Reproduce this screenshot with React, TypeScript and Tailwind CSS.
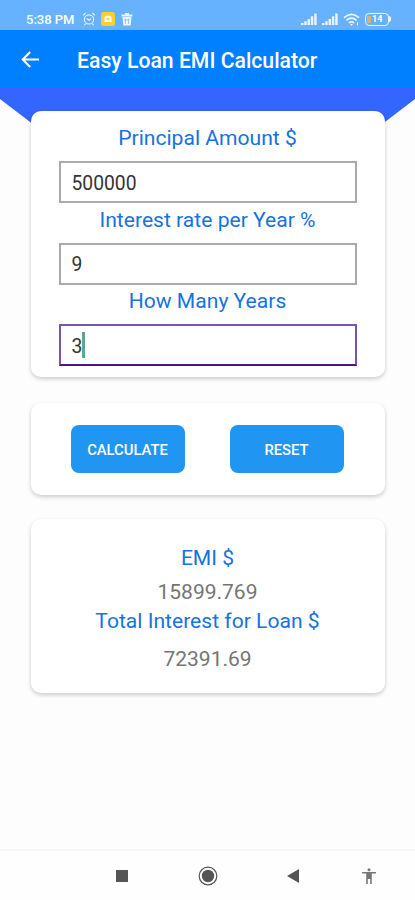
import { useState } from "react";

const labelClass =
  "text-center text-[21.1px] leading-[30px] text-[#1673dd] whitespace-nowrap";
const cardClass =
  "mx-auto w-[354px] rounded-[10px] bg-white shadow-[0_2px_4px_rgba(0,0,0,0.2)]";

const StatusBar = () => {
  return (
    <div className="flex h-[30px] items-center bg-[#66b2ff] pl-[26px] pr-6 pt-2 text-white">
      <span className="w-[50px] whitespace-nowrap pt-px text-[13px] font-medium leading-none">
        5:38 PM
      </span>
      {/* Alarm */}
      <svg width="14" height="14" viewBox="0 0 14 14" className="ml-[6px]" fill="none" stroke="#e5f0ff" strokeWidth="1.2">
        <circle cx="7" cy="7.4" r="4.6" />
        <path d="M1 3.4 3.6 1M13 3.4 10.4 1M3.6 11.6 2.4 13M10.4 11.6l1.2 1.4M4.6 6.4 7 8.2l2-1.4" />
      </svg>
      <svg width="14" height="14" viewBox="0 0 14 14" className="ml-[5px]">
        <rect width="14" height="14" rx="2.5" fill="#fbcf2d" />
        <path d="M4.8 3.7h4.4l1.4 1.6v4.8H3.4V5.3z" fill="#fffbe8" />
        <rect x="5.7" y="6.1" width="2.6" height="1.8" fill="#fbcf2d" />
      </svg>
      {/* Trash */}
      <svg width="12" height="13" viewBox="0 0 12 13" className="ml-[6px]">
        <path d="M4 0h4v1.5h3.5v2H.5v-2H4zM1.5 4h9l-.8 8.5H2.3z" fill="#edf6ff" />
        <path d="M4.2 5.5 4.6 11M7.8 5.5 7.4 11M3.4 7h5" stroke="#7fbcff" strokeWidth=".8" />
      </svg>
      <div className="ml-auto flex items-center">
        <Signal />
        <Signal />
        {/* Wifi */}
        <svg width="17" height="13" viewBox="0 0 17 13" fill="none" stroke="#f0f7ff" strokeWidth="1.7">
          <path d="M1 4.7Q8.5-2 16 4.7M3.4 7.4q5.1-4.4 10.2 0M5.9 9.9q2.6-2 5.2 0" />
          <path d="m7 11 1.5 2L10 11z" fill="#f0f7ff" stroke="none" />
          <path d="M14.5 9.4v3" strokeWidth="1" />
        </svg>
        {/* Battery */}
        <div className="ml-[5px] flex items-center">
          <div className="flex h-[13px] w-6 items-center rounded-[4px] border-[1.5px] border-[#edf6ff] pl-[1px]">
            <span className="h-[7px] w-1 bg-[#d4b27c]" />
            <span className="ml-[1px] text-[9px] font-bold leading-none">14</span>
          </div>
          <span className="h-1.5 w-[2px] rounded-r bg-[#edf6ff]" />
        </div>
      </div>
    </div>
  );
};

const Signal = () => (
  <svg width="16" height="12" viewBox="0 0 16 12" className="mr-[5px]" fill="#e8f3ff">
    <path d="M0 10h2.5v2H0zM3.2 8.3h2.5V12H3.2zM6.5 6H9v6H6.5zM9.8 3.3h2.5V12H9.8zM13.2 0.5h2.5V12h-2.5z" />
  </svg>
);

type FieldProps = {
  label: string;
  value: string;
  active?: boolean;
};

const Field = ({ label, value, active }: FieldProps) => {
  return (
    <div className="h-[81.5px]">
      <p className={labelClass}>{label}</p>
      <div
        className={
          active
            ? "mt-2 flex h-[42px] items-center border-2 border-[#7a52b3] border-b-[#4b1590] pl-[11px]"
            : "mt-2 flex h-[42px] items-center border-2 border-[#aaaaaa] pl-[11px]"
        }
      >
        <span className="pt-[3px] text-[19.3px] leading-none text-[#333333]">{value}</span>
        {active && <span className="h-[26px] w-[3px] bg-[#61a58e]" />}
      </div>
    </div>
  );
};

const buttonClass =
  "h-12 w-[114px] rounded-[8px] bg-[#2095f2] pt-[2px] text-[14.8px] font-medium text-white";

const App = () => {
  const [values, setValues] = useState(["500000", "9", "3"]);
  const [result, setResult] = useState(["15899.769", "72391.69"]);

  const calculate = () => {
    const [p, rate, years] = values.map(Number);
    const r = rate / 1200;
    const n = years * 12;
    const emi = (p * r * (1 + r) ** n) / ((1 + r) ** n - 1);
    if (!isFinite(emi)) return;
    setResult([emi.toFixed(3), (emi * n - p).toFixed(2)]);
  };

  const reset = () => {
    setValues(["", "", ""]);
    setResult(["", ""]);
  };

  return (
    <div className="flex h-[900px] w-[415px] flex-col overflow-hidden bg-[#fdfdfd] font-[Roboto,sans-serif]">
      <StatusBar />

      <header className="flex h-[58px] items-center bg-[#0080ff] pl-[21px] text-white">
        <svg width="19" height="17" viewBox="0 0 19 17" fill="none" stroke="white" strokeWidth="2">
          <path d="M18 8.5H2M9.2 1 1.7 8.5 9.2 16" />
        </svg>
        <h1 className="ml-[37px] pt-[3px] text-[21.2px] font-medium leading-none whitespace-nowrap">
          Easy Loan EMI Calculator
        </h1>
      </header>

      <main className="relative flex-1 pt-[23px]">
        {/* Banner behind the first card */}
        <svg width="415" height="50" viewBox="0 0 415 50" className="absolute left-0 top-0">
          <path d="M0 0h415v11l-51 39H51L0 11z" fill="#3366ff" />
        </svg>

        <section className={`${cardClass} relative h-[266px] px-7 pt-3`}>
          <Field label="Principal Amount $" value={values[0]} />
          <Field label="Interest rate per Year %" value={values[1]} />
          <Field label="How Many Years" value={values[2]} active />
        </section>

        <section className={`${cardClass} mt-[26px] flex h-[92px] items-center justify-between pl-10 pr-[41px]`}>
          <button className={buttonClass} onClick={calculate}>
            CALCULATE
          </button>
          <button className={buttonClass} onClick={reset}>
            RESET
          </button>
        </section>

        <section className={`${cardClass} mt-6 h-[174px] pt-6`}>
          <p className={labelClass}>EMI $</p>
          <p className="mt-1 text-center text-[21px] leading-[30px] text-[#757575]">{result[0]}</p>
          <p className={`${labelClass} -mt-px`}>Total Interest for Loan $</p>
          <p className="mt-2 text-center text-[21px] leading-[30px] text-[#757575]">{result[1]}</p>
        </section>
      </main>

      {/* System navigation */}
      <nav className="flex h-[51px] items-center border-t-2 border-[#f6f6f6] bg-[#fefefe] pl-[116px] text-[#555555]">
        <span className="size-3 bg-[#555555]" />
        <svg width="20" height="20" viewBox="0 0 20 20" className="ml-[70px]">
          <circle cx="10" cy="10" r="8.8" fill="none" stroke="currentColor" strokeWidth="1.2" />
          <circle cx="10" cy="10" r="6.2" fill="currentColor" />
        </svg>
        <svg width="12" height="14" viewBox="0 0 12 14" className="ml-[69px]">
          <path d="M0 7 12 0v14z" fill="currentColor" />
        </svg>
        <svg width="14" height="16" viewBox="0 0 14 16" className="ml-[63px]" fill="#777777">
          <circle cx="7" cy="1.7" r="1.5" />
          <path d="M0 4h14v1.5H9.8V16H8.2v-5H5.8v5H4.2V5.5H0z" />
        </svg>
      </nav>
    </div>
  );
};

export default App;
